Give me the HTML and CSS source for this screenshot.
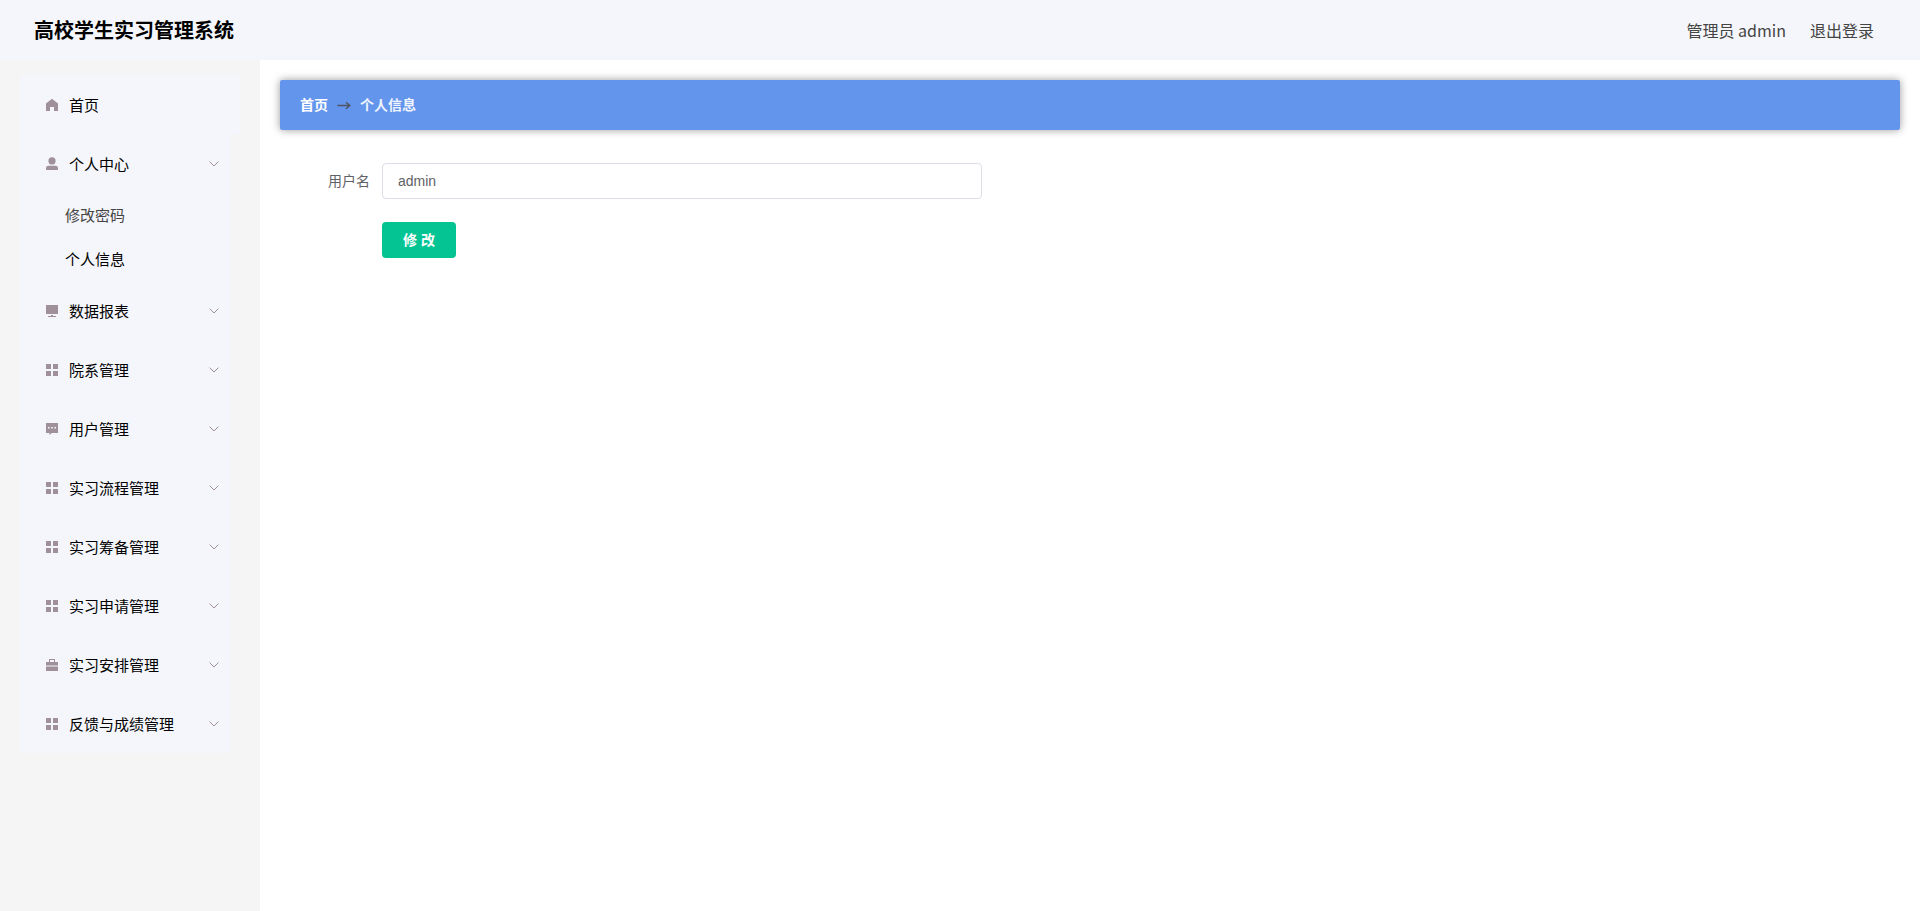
FILE: index.html
```html
<!DOCTYPE html>
<html lang="zh-CN">
<head>
  <meta charset="UTF-8" />
  <meta name="viewport" content="width=device-width, initial-scale=1.0"/>
  <title>高校学生实习管理系统</title>
  <link rel="stylesheet" href="styles.css">
</head>
<body>
  <svg class="sprite" aria-hidden="true">
    <symbol id="icon-home" viewBox="0 0 14 14">
      <path d="M7 0.8 L13 5.4 V13 H9 V9 H5 V13 H1 V5.4 Z"/>
    </symbol>
    <symbol id="icon-user" viewBox="0 0 14 14">
      <circle cx="7" cy="3.9" r="3.6"/>
      <path d="M3.4 8.8 H10.6 A2.4 2.4 0 0 1 13 11.2 V13 H1 V11.2 A2.4 2.4 0 0 1 3.4 8.8 Z"/>
    </symbol>
    <symbol id="icon-screen" viewBox="0 0 14 14">
      <path d="M1 1 H13 V10 H1 Z M6 11 H8 V12 H11 V13 H3 V12 H6 Z"/>
    </symbol>
    <symbol id="icon-grid" viewBox="0 0 14 14">
      <path d="M1 1 H6 V6 H1 Z M8 1 H13 V6 H8 Z M1 8 H6 V13 H1 Z M8 8 H13 V13 H8 Z"/>
    </symbol>
    <symbol id="icon-chat" viewBox="0 0 14 14">
      <path fill-rule="evenodd" d="M1 1 H13 V11 H7 L4.4 13 V11 H1 Z M3 5 V6.4 H4.6 V5 Z M6.2 5 V6.4 H7.8 V5 Z M9.4 5 V6.4 H11 V5 Z"/>
    </symbol>
    <symbol id="icon-case" viewBox="0 0 14 14">
      <path fill-rule="evenodd" d="M4 1 H10 V4 H13 V7.5 H1 V4 H4 Z M5 2 V4 H9 V2 Z M1 8.4 H13 V13 H1 Z"/>
    </symbol>
    <symbol id="icon-down" viewBox="0 0 12 12">
      <path d="M1.6 3.6 L6 8 L10.4 3.6" fill="none" stroke="currentColor" stroke-width="1"/>
    </symbol>
    <symbol id="icon-arrow" viewBox="0 0 14 14">
      <path d="M0.5 7.5 H12.5 M9 4.3 L12.8 7.5 L9 10.7" fill="none" stroke="currentColor" stroke-width="1.5"/>
    </symbol>
  </svg>

  <header class="header">
    <h1 class="title">高校学生实习管理系统</h1>
    <div class="account">
      <span>管理员 admin</span>
      <a href="#">退出登录</a>
    </div>
  </header>

  <div class="layout">
    <aside class="sidebar">
      <nav>
        <a class="menu-item home" href="#"><svg class="icon"><use href="#icon-home"/></svg>首页</a>
        <div class="menu-group">
          <button class="menu-item" type="button"><svg class="icon"><use href="#icon-user"/></svg>个人中心<svg class="chevron"><use href="#icon-down"/></svg></button>
          <ul class="submenu">
            <li><a href="#">修改密码</a></li>
            <li><a class="active" href="#">个人信息</a></li>
          </ul>
          <button class="menu-item" type="button"><svg class="icon"><use href="#icon-screen"/></svg>数据报表<svg class="chevron"><use href="#icon-down"/></svg></button>
          <button class="menu-item" type="button"><svg class="icon"><use href="#icon-grid"/></svg>院系管理<svg class="chevron"><use href="#icon-down"/></svg></button>
          <button class="menu-item" type="button"><svg class="icon"><use href="#icon-chat"/></svg>用户管理<svg class="chevron"><use href="#icon-down"/></svg></button>
          <button class="menu-item" type="button"><svg class="icon"><use href="#icon-grid"/></svg>实习流程管理<svg class="chevron"><use href="#icon-down"/></svg></button>
          <button class="menu-item" type="button"><svg class="icon"><use href="#icon-grid"/></svg>实习筹备管理<svg class="chevron"><use href="#icon-down"/></svg></button>
          <button class="menu-item" type="button"><svg class="icon"><use href="#icon-grid"/></svg>实习申请管理<svg class="chevron"><use href="#icon-down"/></svg></button>
          <button class="menu-item" type="button"><svg class="icon"><use href="#icon-case"/></svg>实习安排管理<svg class="chevron"><use href="#icon-down"/></svg></button>
          <button class="menu-item" type="button"><svg class="icon"><use href="#icon-grid"/></svg>反馈与成绩管理<svg class="chevron"><use href="#icon-down"/></svg></button>
        </div>
      </nav>
    </aside>

    <main class="main">
      <div class="breadcrumb">
        <a href="#">首页</a>
        <svg class="arrow"><use href="#icon-arrow"/></svg>
        <span>个人信息</span>
      </div>
      <form class="form">
        <label for="username">用户名</label>
        <input id="username" type="text" value="admin">
        <button class="submit" type="button">修 改</button>
      </form>
    </main>
  </div>
</body>
</html>
```

FILE: styles.css
```css
:root {
  --panel: #f4f6fb;
  --icon: #a0909a;
  --primary: #04c493;
}

* {
  box-sizing: border-box;
}

body {
  margin: 0;
  min-height: 100vh;
  display: flex;
  flex-direction: column;
  font-family: "Liberation Sans", Arial, "Noto Sans CJK SC", sans-serif;
  font-size: 14px;
  line-height: 1;
  color: #444;
  background: #fff;
}

a {
  color: inherit;
  text-decoration: none;
}

button,
input {
  font-family: inherit;
  line-height: inherit;
}

.sprite {
  display: none;
}

.header {
  height: 60px;
  padding: 0 46px 0 34px;
  display: flex;
  justify-content: space-between;
  align-items: center;
  font-family: "Noto Sans CJK SC", sans-serif;
  line-height: 24px;
  background: var(--panel);
}

.title {
  margin: 0;
  font-size: 20px;
  color: #000;
}

.account {
  display: flex;
  gap: 24px;
  font-size: 16px;
}

.layout {
  flex: 1;
  display: flex;
}

.sidebar {
  width: 260px;
  flex-shrink: 0;
  padding: 15px 20px;
  font-family: "Noto Sans CJK SC", sans-serif;
  background: #f5f5f5;
}

.menu-group {
  width: 210px;
  background: var(--panel);
}

.menu-item {
  width: 100%;
  height: 59px;
  padding: 0 10px 0 25px;
  display: flex;
  align-items: center;
  border: none;
  font-size: 15px;
  color: #000;
  background: var(--panel);
  cursor: pointer;
}

.icon {
  width: 14px;
  height: 14px;
  margin-right: 10px;
  fill: var(--icon);
}

.chevron {
  width: 12px;
  height: 12px;
  margin-left: auto;
  color: var(--icon);
}

.submenu {
  margin: 0;
  padding: 0;
  list-style: none;
  font-size: 15px;
}

.submenu a {
  display: block;
  padding-left: 45px;
  line-height: 44px;
}

.submenu .active {
  color: #000;
}

.main {
  flex: 1;
  padding: 20px;
}

.breadcrumb {
  height: 50px;
  padding: 0 20px;
  display: flex;
  align-items: center;
  gap: 9px;
  border-radius: 2px;
  font-weight: bold;
  color: #fff;
  background: #6495ed;
  box-shadow: 0 0 8px rgba(0, 0, 0, 0.4);
}

.breadcrumb span {
  color: #f0f4fd;
}

.arrow {
  width: 14px;
  height: 14px;
  color: #505560;
}

.form {
  margin-top: 33px;
  display: grid;
  grid-template-columns: 90px minmax(0, 600px);
  column-gap: 12px;
  row-gap: 23px;
  align-items: center;
}

.form label {
  text-align: right;
  color: #606266;
}

.form input {
  width: 100%;
  height: 36px;
  padding: 0 15px;
  border: 1px solid #dcdfe6;
  border-radius: 4px;
  font-size: 14px;
  color: #606266;
}

.submit {
  grid-column: 2;
  justify-self: start;
  height: 36px;
  padding: 0 21px;
  border: none;
  border-radius: 4px;
  font-size: 14px;
  font-weight: bold;
  color: #fff;
  background: var(--primary);
  cursor: pointer;
}
```
